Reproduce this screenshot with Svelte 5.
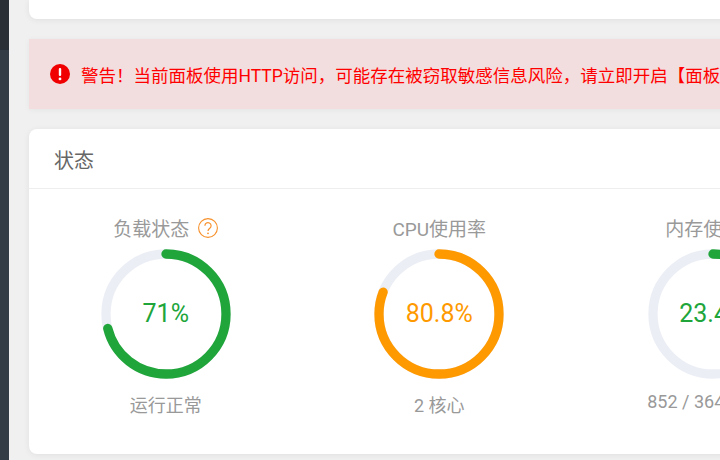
<script>
  const R = 60;
  const C = 2 * Math.PI * R;
  const gauges = [
    { title: '负载状态', help: true, value: 71, label: '71%', color: '#20a53a', sub: '运行正常' },
    { title: 'CPU使用率', value: 80.8, label: '80.8%', color: '#ff9900', sub: '2 核心' },
    { title: '内存使用率', value: 23.4, label: '23.4%', color: '#20a53a', sub: '852 / 3640 (MB)' },
    { title: '/', value: 42, label: '42%', color: '#20a53a', sub: '16.8 GB / 40 GB' }
  ];
</script>

<div class="app">
  <aside class="side">
    <div class="side-top"></div>
    <div class="side-rest"></div>
  </aside>
  <main class="main">
    <div class="card top-card"></div>
    <div class="alert">
      <svg class="alert-icon" viewBox="0 0 20 20" width="20" height="20">
        <circle cx="10" cy="10" r="10" fill="#f00000" />
        <rect x="8.8" y="4" width="2.4" height="8" rx="1.1" fill="#fff" />
        <circle cx="10" cy="14.9" r="1.4" fill="#fff" />
      </svg>
      <span class="alert-text">警告！当前面板使用HTTP访问，可能存在被窃取敏感信息风险，请立即开启【面板SSL】</span>
    </div>
    <section class="card status">
      <header class="status-head">状态</header>
      <div class="gauges">
        {#each gauges as g}
          <div class="gauge">
            <div class="g-title">
              <span>{g.title}</span>
              {#if g.help}
                <svg class="help" viewBox="0 0 20 20" width="20" height="20">
                  <circle cx="10" cy="10" r="9.4" fill="none" stroke="#f7902a" stroke-width="1.1" />
                  <path d="M6.9 7.7a3.1 3.1 0 1 1 4.9 2.5c-1.1.8-1.8 1.3-1.8 2.8" fill="none" stroke="#f7902a" stroke-width="1.2" />
                  <circle cx="10" cy="15.3" r=".9" fill="#f7902a" />
                </svg>
              {/if}
            </div>
            <div class="ring">
              <svg viewBox="0 0 130 130" width="130" height="130">
                <circle cx="65" cy="65" r={R} fill="none" stroke="#ebeef5" stroke-width="9.3" />
                <circle
                  cx="65" cy="65" r={R} fill="none" stroke={g.color} stroke-width="9.3"
                  stroke-linecap="round"
                  stroke-dasharray="{C * g.value / 100} {C}"
                  transform="rotate(-90 65 65)"
                />
              </svg>
              <span class="pct" style="color:{g.color}">{g.label}</span>
            </div>
            <div class="g-sub">{g.sub}</div>
          </div>
        {/each}
      </div>
    </section>
  </main>
</div>

<style>
  :global(body) {
    margin: 0;
    overflow: hidden;
    background: #f0f0f0;
  }
  .app {
    display: flex;
    width: 720px;
    height: 460px;
    overflow: hidden;
    font-family: Roboto, "Noto Sans CJK SC", sans-serif;
  }
  .side {
    flex: 0 0 9px;
    display: flex;
    flex-direction: column;
  }
  .side-top {
    height: 50px;
    background: #2a2f36;
  }
  .side-rest {
    flex: 1;
    background: #333c44;
  }
  .main {
    flex: 1;
    min-width: 0;
    padding-left: 20px;
    overflow: hidden;
  }
  .card {
    width: 1094px;
    background: #fff;
    border-radius: 8px;
    box-shadow: 0 1px 6px rgba(0, 0, 0, 0.07);
  }
  .top-card {
    height: 19px;
    border-radius: 0 0 8px 8px;
  }
  .alert {
    width: 1094px;
    height: 70px;
    margin-top: 20px;
    padding-left: 21px;
    box-sizing: border-box;
    display: flex;
    align-items: center;
    gap: 11px;
    background: #f2dede;
    box-shadow: 0 1px 6px rgba(0, 0, 0, 0.05);
  }
  .alert-icon {
    flex: none;
  }
  .alert-text {
    font-size: 17.5px;
    line-height: 24px;
    padding-top: 3px;
    color: #f00;
    white-space: nowrap;
  }
  .status {
    margin-top: 20px;
    height: 325px;
  }
  .status-head {
    height: 59px;
    line-height: 64px;
    padding-left: 25px;
    font-size: 20px;
    color: #666;
    border-bottom: 1px solid #eeeeee;
  }
  .gauges {
    display: grid;
    grid-template-columns: repeat(4, 273.5px);
  }
  .gauge {
    display: flex;
    flex-direction: column;
    align-items: center;
    padding-top: 23px;
  }
  .g-title {
    height: 30px;
    display: flex;
    align-items: center;
    gap: 9px;
    font-size: 19px;
    color: #999;
  }
  .help {
    margin-top: 2px;
  }
  .ring {
    position: relative;
    width: 130px;
    height: 130px;
    margin-top: 7px;
  }
  .ring svg {
    display: block;
  }
  .pct {
    position: absolute;
    inset: 0 0 1px 0;
    display: flex;
    align-items: center;
    justify-content: center;
    font-size: 25px;
  }
  .g-sub {
    margin-top: 12px;
    font-size: 18px;
    color: #999;
  }
</style>
